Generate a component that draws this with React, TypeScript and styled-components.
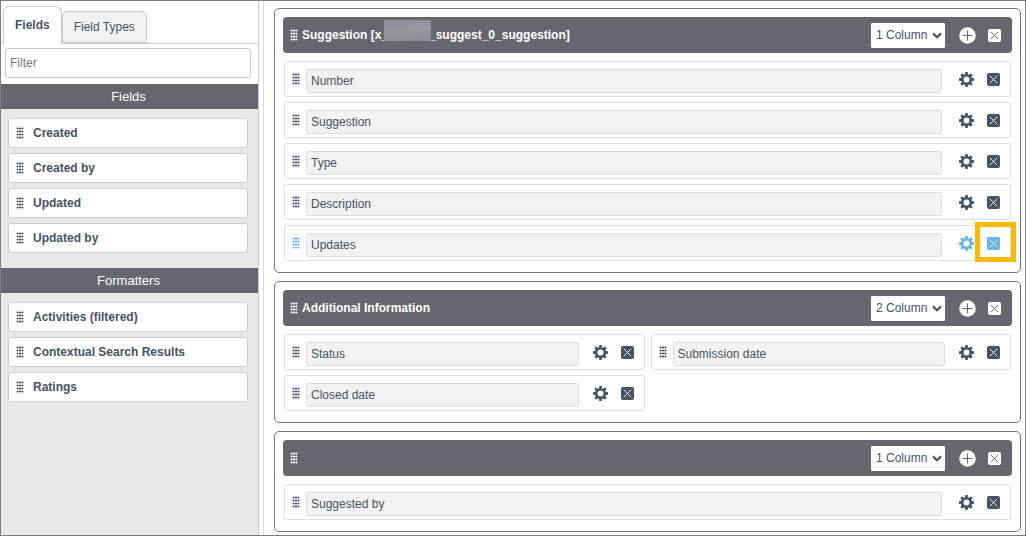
import React from "react";
import styled, { createGlobalStyle } from "styled-components";

const ink = "#455464";
const bar = "#66666f";
const blue = "#65b5ec";

const GlobalStyle = createGlobalStyle`
  *, *::before, *::after { box-sizing: border-box; }
  body {
    margin: 0;
    background: #fff;
    color: ${ink};
    font: 12px/16px "Liberation Sans", Arial, sans-serif;
  }
  button, input, select { font: inherit; color: inherit; }
  h2, ul { margin: 0; padding: 0; font: inherit; list-style: none; }
`;

const Page = styled.div`
  display: grid;
  grid-template-columns: 258px minmax(0, 1fr);
  column-gap: 4px;
  min-height: 100vh;
  border: 1px solid #7d7d7f;
`;

const Sidebar = styled.aside`
  display: flex;
  flex-direction: column;
  border-right: 1px solid #c9cbcd;
  background: #e6e8ea;
`;

const SidebarTop = styled.div`
  background: #fff;
  padding-top: 5px;
`;

const Tabs = styled.div`
  display: flex;
  align-items: flex-end;
  padding-left: 2px;
  border-bottom: 1px solid #c9cbcd;
`;

const Tab = styled.button<{ $active?: boolean }>`
  height: ${(p) => (p.$active ? 38 : 32)}px;
  padding: 0 11px;
  margin-bottom: ${(p) => (p.$active ? -1 : 0)}px;
  border: 1px solid #c9cbcd;
  border-bottom-color: ${(p) => (p.$active ? "#fff" : "#c9cbcd")};
  border-radius: 6px 6px 0 0;
  background: ${(p) => (p.$active ? "#fff" : "#f2f2f2")};
  font-weight: ${(p) => (p.$active ? "bold" : "normal")};
`;

const FilterBox = styled.div`
  padding: 4px 7px 6px 4px;
`;

const Filter = styled.input`
  display: block;
  width: 100%;
  height: 30px;
  padding: 0 4px;
  border: 1px solid #c4c6c8;
  border-radius: 3px;
  background: #fff;
  &::placeholder { color: #777; opacity: 1; }
`;

const ListTitle = styled.h2`
  height: 25px;
  padding-right: 2px;
  font-size: 13px;
  line-height: 25px;
  text-align: center;
  color: #fff;
  background: ${bar};
`;

const FieldList = styled.ul`
  display: flex;
  flex-direction: column;
  gap: 5px;
  padding: 9px 10px 15px 7px;
`;

const FieldItem = styled.li`
  display: flex;
  align-items: center;
  gap: 9px;
  height: 30px;
  padding-left: 7px;
  border: 1px solid #cdcfd1;
  border-radius: 3px;
  background: #fff;
  font-weight: bold;
`;

const Main = styled.main`
  display: flex;
  flex-direction: column;
  gap: 8px;
  padding: 7px 4px 3px 10px;
  border-left: 1px solid #dcdcde;
`;

const Section = styled.section`
  padding: 8px 8px 11px;
  border: 1px solid #74747d;
  border-radius: 5px;
`;

const SectionHead = styled.header`
  display: flex;
  align-items: center;
  height: 36px;
  padding: 0 11px 0 7px;
  margin-bottom: 8px;
  border-radius: 4px;
  color: #fff;
  background: ${bar};
`;

const SectionTitle = styled.h2`
  display: flex;
  flex: 1;
  margin-left: 4px;
  font-weight: bold;
`;

const Redaction = styled.span`
  position: relative;
  width: 41px;
  &::after {
    content: "";
    position: absolute;
    left: -4px;
    top: -7px;
    width: 47px;
    height: 21px;
    background: linear-gradient(170deg, #8b8b92, #98989d 50%, #8a8a91);
  }
`;

const SelectWrap = styled.span`
  position: relative;
  display: flex;
  color: ${ink};
  svg { position: absolute; right: 3px; top: 9px; pointer-events: none; }
`;

const Select = styled.select`
  appearance: none;
  width: 74px;
  height: 25px;
  padding: 0 4px;
  border: 1px solid #fff;
  border-radius: 1px;
  background: #fff;
`;

const IconButton = styled.button<{ $gap: number; $marked?: boolean }>`
  position: relative;
  display: flex;
  flex: none;
  padding: 0;
  margin-left: ${(p) => p.$gap}px;
  border: 0;
  background: none;
  &::after {
    content: "";
    display: ${(p) => (p.$marked ? "block" : "none")};
    position: absolute;
    inset: -15px -16px -12px -12px;
    border: 5px solid #fcb900;
  }
`;

const Rows = styled.ul<{ $columns: number }>`
  display: grid;
  grid-template-columns: repeat(${(p) => p.$columns}, minmax(0, 1fr));
  gap: 5px 6px;
  padding: 0 1px;
`;

const Row = styled.li<{ $active?: boolean }>`
  display: flex;
  align-items: center;
  height: 36px;
  padding: 0 10px 0 7px;
  border: 1px solid #dfe0e2;
  border-radius: 3px;
  color: ${(p) => (p.$active ? blue : ink)};
`;

const FieldName = styled.span`
  flex: 1;
  height: 24px;
  margin: 4px 0 0 6px;
  padding: 0 4px;
  border: 1px solid #dcdddf;
  border-radius: 3px;
  line-height: 23px;
  color: ${ink};
  background: #f2f2f2;
`;

const Grip = () => (
  <svg width="8" height="12" viewBox="0 0 8 12" fill="currentColor" aria-hidden="true">
    {[1.5, 4.5, 7.5, 10.5].map((y) =>
      [1.6, 4, 6.4].map((x) => <circle key={`${x}-${y}`} cx={x} cy={y} r="1.1" />)
    )}
  </svg>
);

const RowTools = styled.span<{ $gap: number }>`
  display: flex;
  align-items: center;
  margin: 0 0 0 ${(p) => p.$gap}px;
`;

const Gear = () => (
  <svg width="15" height="15" viewBox="-7.5 -7.5 15 15" aria-hidden="true">
    <circle r="4.3" fill="none" stroke="currentColor" strokeWidth="2.6" />
    {[0, 45, 90, 135, 180, 225, 270, 315].map((a) => (
      <rect key={a} x="-1.4" y="-7.5" width="2.8" height="3" rx="0.7" fill="currentColor" transform={`rotate(${a})`} />
    ))}
  </svg>
);

const Cross = ({ stroke }: { stroke: string }) => (
  <svg width="13" height="13" viewBox="0 0 13 13" aria-hidden="true">
    <rect width="13" height="13" rx="2" fill="currentColor" />
    <path d="M2.8 2.8l7.4 7.4M10.2 2.8l-7.4 7.4" stroke={stroke} strokeWidth="0.9" />
  </svg>
);

const Plus = () => (
  <svg width="17" height="17" viewBox="0 0 17 17" aria-hidden="true">
    <circle cx="8.5" cy="8.5" r="8.3" fill="#fff" />
    <path d="M8.5 3.5v10M3.5 8.5h10" stroke={bar} strokeWidth="1" />
  </svg>
);

const Chevron = () => (
  <svg width="10" height="8" viewBox="0 0 10 8" fill="none" aria-hidden="true">
    <path d="M1 1.4L5 5.2l4-3.8" stroke={ink} strokeWidth="2.2" />
  </svg>
);

type SectionData = { name: string; title: React.ReactNode; columns: 1 | 2; fields: string[]; active?: string };

const sections: SectionData[] = [
  {
    name: "Suggestion",
    title: (
      <>
        Suggestion [x_
        <Redaction />
        _suggest_0_suggestion]
      </>
    ),
    columns: 1,
    fields: ["Number", "Suggestion", "Type", "Description", "Updates"],
    active: "Updates",
  },
  {
    name: "Additional Information",
    title: "Additional Information",
    columns: 2,
    fields: ["Status", "Submission date", "Closed date"],
  },
  { name: "Untitled", title: null, columns: 1, fields: ["Suggested by"] },
];

const palettes = [
  { title: "Fields", items: ["Created", "Created by", "Updated", "Updated by"] },
  { title: "Formatters", items: ["Activities (filtered)", "Contextual Search Results", "Ratings"] },
];

const FormSection = ({ name, title, columns, fields, active }: SectionData) => (
  <Section>
    <SectionHead>
      <Grip />
      <SectionTitle>{title}</SectionTitle>
      <SelectWrap>
        <Select aria-label={`${name} layout`} defaultValue={columns}>
          <option value={1}>1 Column</option>
          <option value={2}>2 Column</option>
        </Select>
        <Chevron />
      </SelectWrap>
      <IconButton $gap={14} aria-label="Add field">
        <Plus />
      </IconButton>
      <IconButton $gap={12} aria-label="Remove section">
        <Cross stroke={bar} />
      </IconButton>
    </SectionHead>
    <Rows $columns={columns}>
      {fields.map((f) => (
        <Row key={f} $active={f === active}>
          <Grip />
          <FieldName>{f}</FieldName>
          <RowTools $gap={columns === 1 ? 17 : 14}>
            <IconButton $gap={0} aria-label={`Configure ${f}`}>
              <Gear />
            </IconButton>
            <IconButton $gap={13} $marked={f === active} aria-label={`Remove ${f}`}>
              <Cross stroke="#fff" />
            </IconButton>
          </RowTools>
        </Row>
      ))}
    </Rows>
  </Section>
);

export default function App() {
  return (
    <>
      <GlobalStyle />
      <Page>
        <Sidebar>
          <SidebarTop>
            <Tabs role="tablist">
              <Tab role="tab" aria-selected $active>
                Fields
              </Tab>
              <Tab role="tab" aria-selected={false}>
                Field Types
              </Tab>
            </Tabs>
            <FilterBox>
              <Filter placeholder="Filter" aria-label="Filter" />
            </FilterBox>
          </SidebarTop>
          {palettes.map((p) => (
            <section key={p.title}>
              <ListTitle>{p.title}</ListTitle>
              <FieldList>
                {p.items.map((i) => (
                  <FieldItem key={i}>
                    <Grip />
                    {i}
                  </FieldItem>
                ))}
              </FieldList>
            </section>
          ))}
        </Sidebar>
        <Main>
          {sections.map((s) => (
            <FormSection key={s.name} {...s} />
          ))}
        </Main>
      </Page>
    </>
  );
}
